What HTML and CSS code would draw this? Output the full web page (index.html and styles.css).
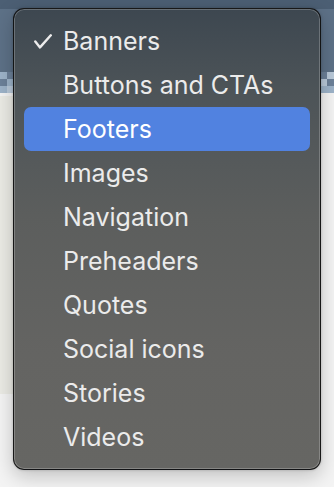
FILE: index.html
```html
<!DOCTYPE html>
<html lang="en">
<head>
<meta charset="utf-8">
<title>Menu</title>
<link rel="stylesheet" href="styles.css">
</head>
<body>
<div class="backdrop">
  <div class="band-top"></div>
  <div class="band-blue"></div>
  <div class="pixels">
    <div class="px-row">
      <span class="px a"></span><span class="px b"></span><span class="px-gap"></span><span class="px b"></span><span class="px c"></span>
    </div>
    <div class="px-row">
      <span class="px b"></span><span class="px a"></span><span class="px-gap"></span><span class="px c"></span><span class="px b"></span>
    </div>
    <div class="px-row">
      <span class="px a"></span><span class="px c"></span><span class="px-gap"></span><span class="px a"></span><span class="px a"></span>
    </div>
  </div>
  <div class="band-light">
    <div class="strip-left"></div>
  </div>
</div>

<div class="menu">
  <div class="item"><svg class="check" width="18" height="15" viewBox="0 0 18 15"><polyline points="1.3,7.5 6,13.4 16.8,1.3" fill="none" stroke="#ececec" stroke-width="2.4" stroke-linecap="round" stroke-linejoin="round"/></svg><span>Banners</span></div>
  <div class="item"><span>Buttons and CTAs</span></div>
  <div class="item active"><span>Footers</span></div>
  <div class="item"><span>Images</span></div>
  <div class="item"><span>Navigation</span></div>
  <div class="item"><span>Preheaders</span></div>
  <div class="item"><span>Quotes</span></div>
  <div class="item"><span>Social icons</span></div>
  <div class="item"><span>Stories</span></div>
  <div class="item"><span>Videos</span></div>
</div>
</body>
</html>
```

FILE: styles.css
```css
* { box-sizing: border-box; }
html, body { margin: 0; padding: 0; }
body {
  width: 334px;
  height: 487px;
  overflow: hidden;
  position: relative;
  background: #f4f4f4;
  font-family: Inter, "Noto Sans", "Liberation Sans", sans-serif;
}
.backdrop { display: flex; flex-direction: column; height: 487px; }
.band-top { height: 9px; background: #4c5f74; }
.band-blue { height: 63px; background: #5d7187; }
.pixels { display: flex; flex-direction: column; }
.px-row { display: flex; height: 7px; }
.px { width: 7px; height: 7px; display: block; }
.px-gap { flex: 1; }
.px.a { background: #9db3c9; }
.px.b { background: #6c8199; }
.px.c { background: #b9c9d9; }
.band-light { flex: 1; background: #f4f4f4; padding-top: 3px; }
.strip-left { width: 14px; height: 298px; background: #ebebe5; }

.menu {
  position: absolute;
  left: 13px;
  top: 8px;
  width: 308px;
  height: 462px;
  border-radius: 11px;
  border: 1px solid rgba(10, 10, 10, 0.85);
  background: linear-gradient(180deg, #3d4750 0%, #4d5458 18%, #5c5e5d 45%, #646462 75%, #666663 100%);
  box-shadow: inset 0 0 0 1px rgba(255, 255, 255, 0.22), 0 6px 20px rgba(0, 0, 0, 0.22), 0 0 3px rgba(0, 0, 0, 0.2);
  padding: 10px 10px;
  display: flex;
  flex-direction: column;
}
.item {
  height: 44px;
  flex: none;
  display: flex;
  align-items: center;
  position: relative;
  padding-left: 39px;
  border-radius: 7px;
  color: #ebebeb;
  font-size: 25px;
  letter-spacing: 0;
}
.item.active {
  background: #5182e0;
  color: #ffffff;
}
.check {
  position: absolute;
  left: 10px;
  top: 15px;
}
```
